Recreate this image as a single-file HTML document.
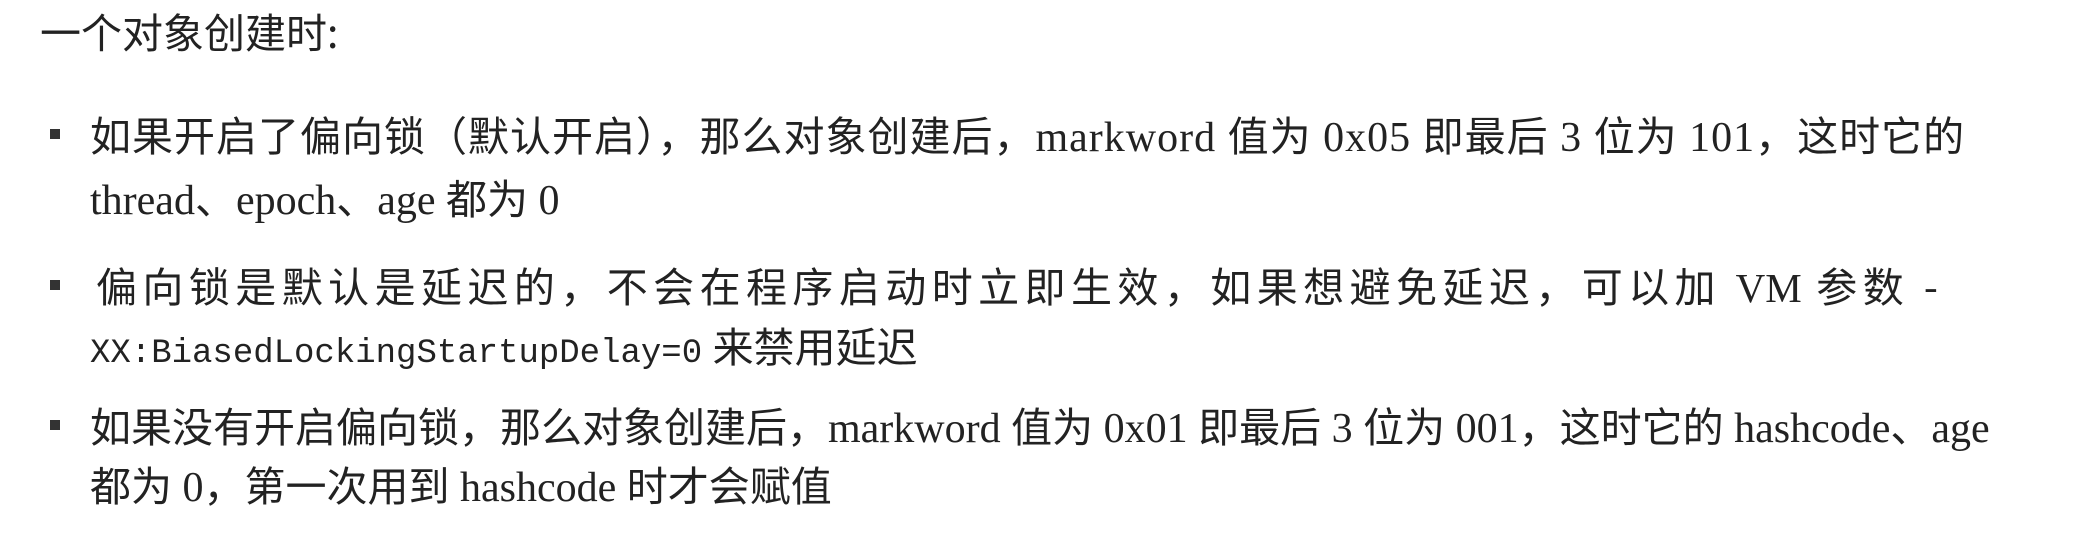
<!DOCTYPE html>
<html><head><meta charset="utf-8">
<style>
html,body{margin:0;padding:0;background:#fff;}
body{width:2095px;height:538px;position:relative;overflow:hidden;color:#222;
font-family:"Liberation Serif","Noto Sans CJK SC",serif;font-size:42px;}
.l{position:absolute;white-space:nowrap;height:56px;line-height:56px;}
.c{font-family:"Noto Sans CJK SC","Liberation Sans",sans-serif;font-size:41px;}
.m{font-family:"Liberation Mono",monospace;font-size:34px;}
.b{position:absolute;left:50px;width:10px;height:10px;background:#333;}
</style></head><body>
<div class="l c" style="left:40px;top:2px;font-size:41px;">一个对象创建时:</div>

<div class="b" style="top:129px"></div>
<div class="l" style="left:90px;top:105px;letter-spacing:1px;"><span class="c">如果开启了偏向锁（默认开启），那么对象创建后，</span>markword <span class="c">值为</span> 0x05 <span class="c">即最后</span> 3 <span class="c">位为</span> 101<span class="c">，这时它的</span></div>
<div class="l" style="left:90px;top:168px;">thread<span class="c">、</span>epoch<span class="c">、</span>age <span class="c">都为</span> 0</div>

<div class="b" style="top:280px"></div>
<div class="l c" style="left:96px;top:256px;width:1842px;white-space:normal;text-align:justify;text-align-last:justify;text-justify:inter-character;">偏向锁是默认是延迟的，不会在程序启动时立即生效，如果想避免延迟，可以加 <span style="font-family:'Liberation Serif',serif">VM</span> 参数 -</div>
<div class="l" style="left:90px;top:316px;"><span class="m">XX:BiasedLockingStartupDelay=0</span> <span class="c">来禁用延迟</span></div>

<div class="b" style="top:420px"></div>
<div class="l" style="left:90px;top:396px;"><span class="c">如果没有开启偏向锁，那么对象创建后，</span>markword <span class="c">值为</span> 0x01 <span class="c">即最后</span> 3 <span class="c">位为</span> 001<span class="c">，这时它的</span> hashcode<span class="c">、</span>age</div>
<div class="l" style="left:90px;top:455px;"><span class="c">都为</span> 0<span class="c">，第一次用到</span> hashcode <span class="c">时才会赋值</span></div>
</body></html>
